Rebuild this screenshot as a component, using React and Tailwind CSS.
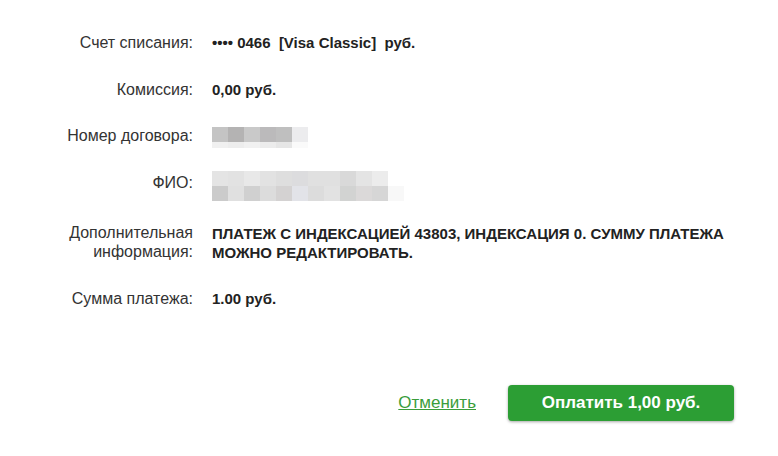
const Row = ({ label, className = "", children }) => (
  <div className={"flex items-start " + className}>
    <div className="w-[195px] shrink-0 pr-[2px] text-right text-[16px] leading-[19px] text-[#333]">
      {label}
    </div>
    <div className="pl-[17px] mt-[1px] text-[15px] font-bold leading-[18px] text-[#222]">
      {children}
    </div>
  </div>
);

const Pixels = ({ rows }) => (
  <div className="flex flex-col">
    {rows.map((row, i) => (
      <div key={i} className="flex">
        {row.colors.map((c, j) => (
          <div key={j} className="w-4" style={{ height: row.h, backgroundColor: c }} />
        ))}
      </div>
    ))}
  </div>
);

export default function App() {
  return (
    <div className="w-[778px] h-[456px] bg-white font-['Liberation_Sans',Arial,sans-serif]">
      <div className="flex flex-col pt-[33px]">
        <Row label="Счет списания:">
          <span className="whitespace-pre">•••• 0466  [Visa Classic]  руб.</span>
        </Row>
        <Row label="Комиссия:" className="mt-[28px]">0,00 руб.</Row>
        <Row label="Номер договора:" className="mt-[27px]">
          <div className="h-[18px]">
            <Pixels
              rows={[
                { h: 15, colors: ["#c4c4c4", "#b4b3b3", "#c9c9c9", "#bbbabb", "#bfbfbf", "#ececee"] },
                { h: 6, colors: ["#f0f0f0", "#ededed", "#f1f1f1", "#ececec", "#e6e6e6", "#fafafa"] },
              ]}
            />
          </div>
        </Row>
        <Row label="ФИО:" className="mt-[28px]">
          <div className="h-[18px] -mt-[3px]">
            <Pixels
              rows={[
                { h: 15, colors: ["#e4e4e4", "#e2e2e2", "#e8e8e8", "#e2e2e2", "#dedede", "#dcdcde", "#e0e0e0", "#e0e0e0", "#d9d9d9", "#e4e4e4", "#ececec"] },
                { h: 15, colors: ["#cbcbcb", "#e0e0e0", "#d0d0d0", "#dcdcdc", "#d4d2d2", "#e2e3e8", "#dcdcdc", "#e2e2e2", "#d2d3d2", "#dbd9d9", "#d6d6d6", "#f8f8f8"] },
              ]}
            />
          </div>
        </Row>
        <Row label={<>Дополнительная<br />информация:</>} className="mt-[31px]">
          <div className="leading-[19px]">
            ПЛАТЕЖ С ИНДЕКСАЦИЕЙ 43803, ИНДЕКСАЦИЯ 0. СУММУ ПЛАТЕЖА
            <br />
            МОЖНО РЕДАКТИРОВАТЬ.
          </div>
        </Row>
        <Row label="Сумма платежа:" className="mt-[27px]">1.00 руб.</Row>
      </div>
      <div className="flex items-center justify-end gap-[32px] pr-[44px] mt-[77px]">
        <a href="#" className="text-[17px] text-[#3a9d3a] underline">
          Отменить
        </a>
        <button className="w-[226px] h-[36px] rounded-[4px] bg-[#2c9e34] text-white text-[17px] font-bold shadow-[0_1px_3px_rgba(0,0,0,0.35)]">
          Оплатить 1,00 руб.
        </button>
      </div>
    </div>
  );
}
